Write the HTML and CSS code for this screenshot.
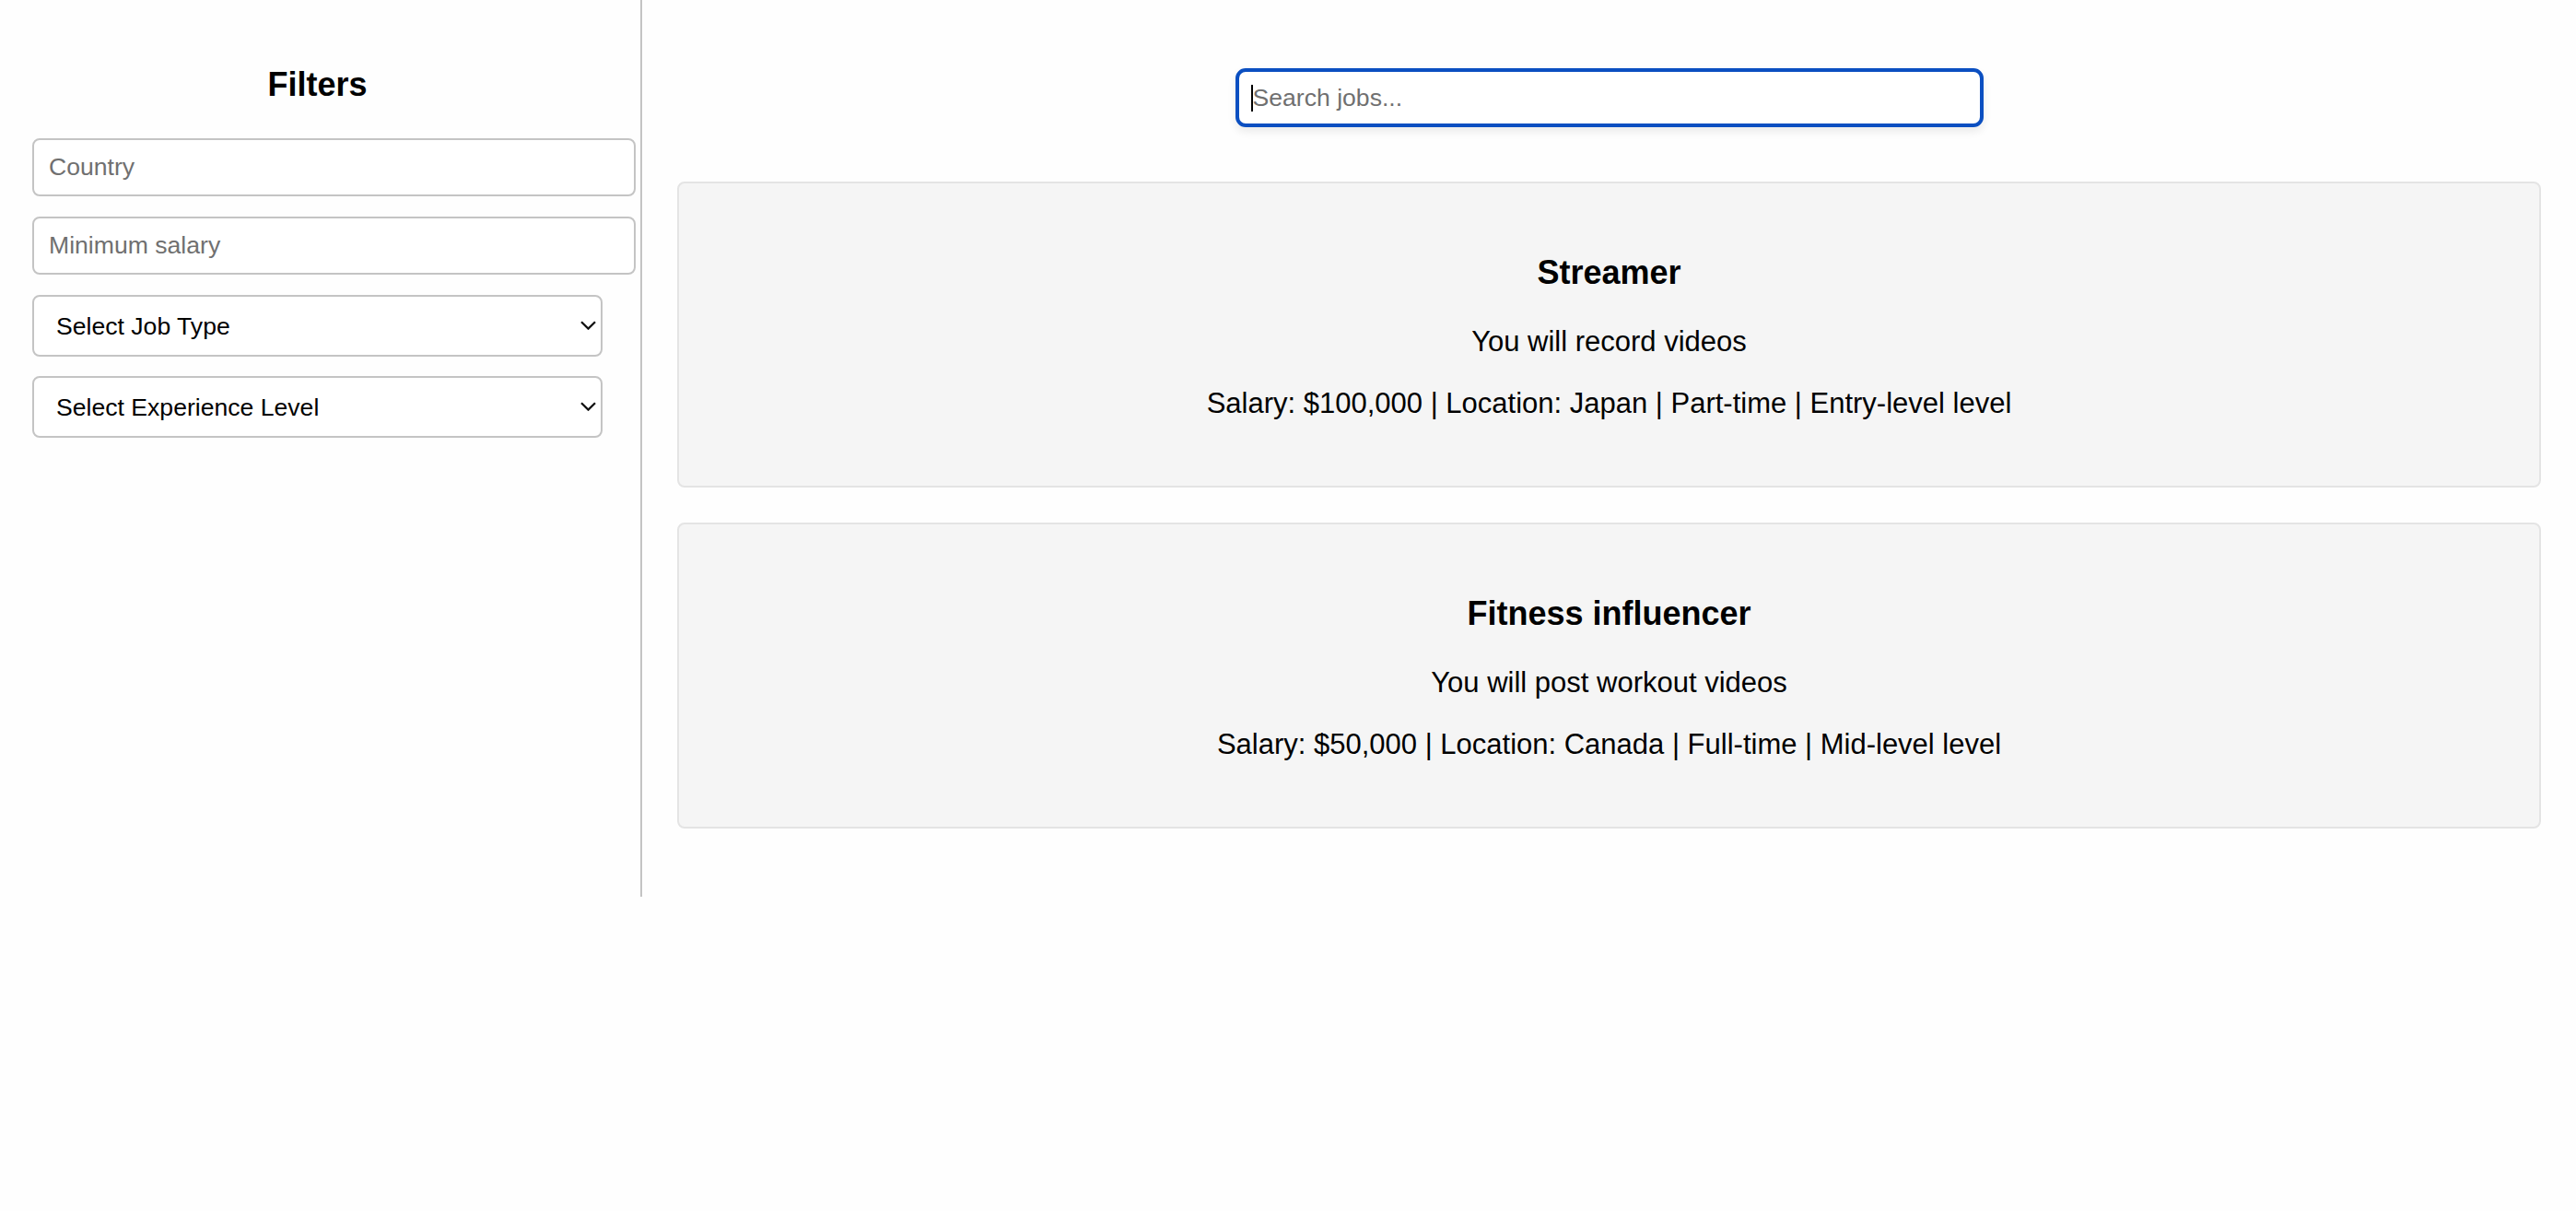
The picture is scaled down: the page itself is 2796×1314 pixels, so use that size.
FILE: index.html
```html
<!DOCTYPE html>
<html lang="en">
<head>
<meta charset="utf-8">
<title>Jobs</title>
<link rel="stylesheet" href="styles.css">
</head>
<body>
<div class="app">
  <aside class="sidebar">
    <h3 class="sidebar-title">Filters</h3>
    <input class="filter-input" type="text" placeholder="Country">
    <input class="filter-input" type="text" placeholder="Minimum salary">
    <div class="select-wrap">
      <select class="filter-select"><option>Select Job Type</option></select>
      <svg class="chevron" viewBox="0 0 17 10" width="17" height="10"><path d="M1 1.2 L8.5 8.6 L16 1.2" fill="none" stroke="#111" stroke-width="2.3"/></svg>
    </div>
    <div class="select-wrap">
      <select class="filter-select"><option>Select Experience Level</option></select>
      <svg class="chevron" viewBox="0 0 17 10" width="17" height="10"><path d="M1 1.2 L8.5 8.6 L16 1.2" fill="none" stroke="#111" stroke-width="2.3"/></svg>
    </div>
  </aside>
  <main class="main">
    <div class="search-wrap">
      <input class="search" type="text" placeholder="Search jobs...">
      <span class="caret"></span>
    </div>
    <div class="job-card">
      <h3 class="job-title">Streamer</h3>
      <p class="job-text">You will record videos</p>
      <p class="job-text">Salary: $100,000 | Location: Japan | Part-time | Entry-level level</p>
    </div>
    <div class="job-card">
      <h3 class="job-title">Fitness influencer</h3>
      <p class="job-text">You will post workout videos</p>
      <p class="job-text">Salary: $50,000 | Location: Canada | Full-time | Mid-level level</p>
    </div>
  </main>
</div>
</body>
</html>
```

FILE: styles.css
```css
html, body {
  margin: 0;
  padding: 0;
  background: #fefefe;
  font-family: "Liberation Sans", Arial, Helvetica, sans-serif;
  color: #000;
}

.app {
  display: flex;
  align-items: stretch;
}

.sidebar {
  box-sizing: content-box;
  width: 619px;
  padding: 35px 41px 0 35px;
  border-right: 2px solid #c4c4c4;
  flex: none;
}

.sidebar-title {
  margin: 36px 0 37px;
  font-size: 36px;
  font-weight: bold;
  text-align: center;
}

.filter-input {
  display: block;
  box-sizing: content-box;
  width: 100%;
  height: 59px;
  padding: 0 16px;
  margin: 0 0 22px;
  border: 2px solid #c4c4c4;
  border-radius: 8px;
  background: #fff;
  font-family: "Liberation Sans", Arial, sans-serif;
  font-size: 26.6px;
  color: #000;
  outline: none;
}

.filter-input::placeholder {
  color: #707070;
}

.select-wrap {
  position: relative;
  width: 619px;
  margin: 0 0 21px;
}

.filter-select {
  display: block;
  box-sizing: border-box;
  width: 100%;
  height: 67px;
  padding: 0 40px 0 24px;
  border: 2px solid #c4c4c4;
  border-radius: 8px;
  background: #fff;
  font-family: "Liberation Sans", Arial, sans-serif;
  font-size: 26.6px;
  color: #000;
  -webkit-appearance: none;
  appearance: none;
  outline: none;
}

.chevron {
  position: absolute;
  right: 7px;
  top: 28px;
  pointer-events: none;
}

.main {
  flex: 1;
  padding: 38px 38px 36px 38px;
  min-width: 0;
}

.search-wrap {
  position: relative;
  width: 812px;
  height: 64px;
  margin: 36px auto 59px;
}

.search {
  display: block;
  box-sizing: border-box;
  width: 100%;
  height: 64px;
  padding: 0 15px;
  border: 4px solid #0b4fc1;
  border-radius: 11px;
  background: #fff;
  font-family: "Liberation Sans", Arial, sans-serif;
  font-size: 26.6px;
  color: #000;
  outline: none;
  box-shadow: 0 5px 10px rgba(0, 0, 0, 0.08);
}

.search::placeholder {
  color: #707070;
}

.caret {
  position: absolute;
  left: 17px;
  top: 18px;
  width: 2px;
  height: 29px;
  background: #000;
}

.job-card {
  padding: 40px;
  margin: 0 0 38px;
  border: 2px solid #e4e4e4;
  border-radius: 8px;
  background: #f5f5f5;
  text-align: center;
}

.job-card:last-child {
  margin-bottom: 38px;
}

.job-title {
  margin: 36px 0;
  font-size: 36px;
  font-weight: bold;
}

.job-text {
  margin: 31px 0;
  font-size: 31px;
}
```
